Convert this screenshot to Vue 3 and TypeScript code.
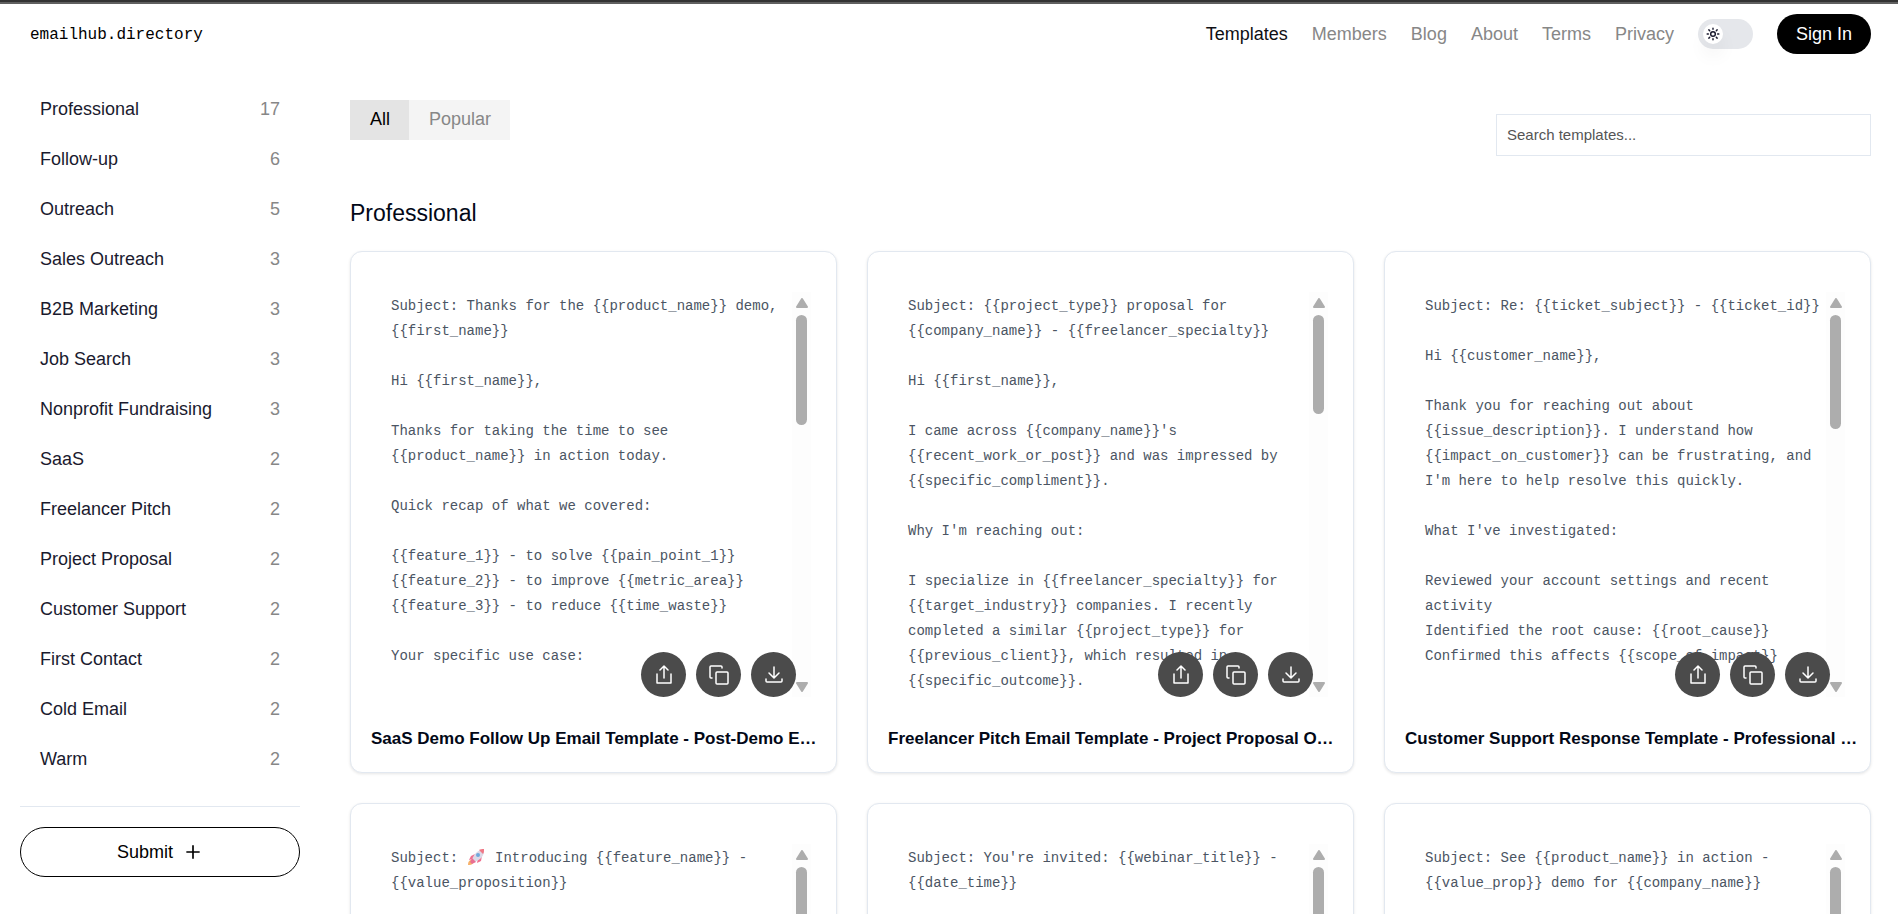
<script setup lang="ts">
import { ref } from 'vue'

interface Category { name: string; count: number }
interface Template { id: string; title?: string; thumb: number; lines: string[] }

const navLinks: string[] = ['Templates', 'Members', 'Blog', 'About', 'Terms', 'Privacy']

const categories: Category[] = [
  { name: 'Professional', count: 17 },
  { name: 'Follow-up', count: 6 },
  { name: 'Outreach', count: 5 },
  { name: 'Sales Outreach', count: 3 },
  { name: 'B2B Marketing', count: 3 },
  { name: 'Job Search', count: 3 },
  { name: 'Nonprofit Fundraising', count: 3 },
  { name: 'SaaS', count: 2 },
  { name: 'Freelancer Pitch', count: 2 },
  { name: 'Project Proposal', count: 2 },
  { name: 'Customer Support', count: 2 },
  { name: 'First Contact', count: 2 },
  { name: 'Cold Email', count: 2 },
  { name: 'Warm', count: 2 },
]

const templates: Template[] = [
  {
    id: 'saas-demo',
    title: 'SaaS Demo Follow Up Email Template - Post-Demo E…',
    thumb: 110,
    lines: [
      'Subject: Thanks for the {{product_name}} demo,',
      '{{first_name}}',
      '',
      'Hi {{first_name}},',
      '',
      'Thanks for taking the time to see',
      '{{product_name}} in action today.',
      '',
      'Quick recap of what we covered:',
      '',
      '{{feature_1}} - to solve {{pain_point_1}}',
      '{{feature_2}} - to improve {{metric_area}}',
      '{{feature_3}} - to reduce {{time_waste}}',
      '',
      'Your specific use case:',
    ],
  },
  {
    id: 'freelancer',
    title: 'Freelancer Pitch Email Template - Project Proposal O…',
    thumb: 99,
    lines: [
      'Subject: {{project_type}} proposal for',
      '{{company_name}} - {{freelancer_specialty}}',
      '',
      'Hi {{first_name}},',
      '',
      "I came across {{company_name}}'s",
      '{{recent_work_or_post}} and was impressed by',
      '{{specific_compliment}}.',
      '',
      "Why I'm reaching out:",
      '',
      'I specialize in {{freelancer_specialty}} for',
      '{{target_industry}} companies. I recently',
      'completed a similar {{project_type}} for',
      '{{previous_client}}, which resulted in',
      '{{specific_outcome}}.',
    ],
  },
  {
    id: 'support',
    title: 'Customer Support Response Template - Professional …',
    thumb: 114,
    lines: [
      'Subject: Re: {{ticket_subject}} - {{ticket_id}}',
      '',
      'Hi {{customer_name}},',
      '',
      'Thank you for reaching out about',
      '{{issue_description}}. I understand how',
      '{{impact_on_customer}} can be frustrating, and',
      "I'm here to help resolve this quickly.",
      '',
      "What I've investigated:",
      '',
      'Reviewed your account settings and recent',
      'activity',
      'Identified the root cause: {{root_cause}}',
      'Confirmed this affects {{scope_of_impact}}',
    ],
  },
  {
    id: 'feature',
    thumb: 110,
    lines: ['Subject: 🚀 Introducing {{feature_name}} -', '{{value_proposition}}'],
  },
  {
    id: 'webinar',
    thumb: 110,
    lines: ["Subject: You're invited: {{webinar_title}} -", '{{date_time}}'],
  },
  {
    id: 'product-demo',
    thumb: 110,
    lines: ['Subject: See {{product_name}} in action -', '{{value_prop}} demo for {{company_name}}'],
  },
]

const tab = ref<'All' | 'Popular'>('All')
const query = ref('')
const dark = ref(false)
</script>

<template>
  <div class="app">
    <div class="strip"></div>
    <header class="header">
      <a class="logo" href="#">emailhub.directory</a>
      <nav class="nav" aria-label="Main">
        <a v-for="(link, i) in navLinks" :key="link" href="#" :class="{ current: i === 0 }">{{ link }}</a>
        <label class="toggle">
          <input v-model="dark" type="checkbox" aria-label="Dark mode" />
          <span class="knob">
            <svg width="14" height="14" viewBox="0 0 24 24" fill="none" stroke="#1a1a2e" stroke-width="2.5" stroke-linecap="round">
              <circle cx="12" cy="12" r="4" />
              <path d="M12 2v2M12 20v2M4.93 4.93l1.41 1.41M17.66 17.66l1.41 1.41M2 12h2M20 12h2M6.34 17.66l-1.41 1.41M19.07 4.93l-1.41 1.41" />
            </svg>
          </span>
        </label>
        <button class="signin" type="button">Sign In</button>
      </nav>
    </header>

    <div class="body">
      <aside class="sidebar">
        <ul class="categories">
          <li v-for="c in categories" :key="c.name">
            <a href="#"><span>{{ c.name }}</span><span class="count">{{ c.count }}</span></a>
          </li>
        </ul>
        <div class="submit-area">
          <button class="submit" type="button">
            Submit
            <svg width="20" height="20" viewBox="0 0 24 24" fill="none" stroke="currentColor" stroke-width="2">
              <path d="M12 4v16M4 12h16" />
            </svg>
          </button>
        </div>
      </aside>

      <main class="main">
        <div class="toolbar">
          <div class="tabs">
            <button type="button" :class="{ active: tab === 'All' }" @click="tab = 'All'">All</button>
            <button type="button" :class="{ active: tab === 'Popular' }" @click="tab = 'Popular'">Popular</button>
          </div>
          <input v-model="query" class="search" type="text" placeholder="Search templates..." aria-label="Search templates" />
        </div>

        <h2 class="heading">Professional</h2>

        <div class="grid">
          <article v-for="t in templates" :key="t.id" class="card">
            <div class="preview">
              <div class="text">
                <div v-for="(line, i) in t.lines" :key="i" class="line"><template v-for="(part, j) in line.split('🚀')" :key="j"><svg v-if="j > 0" class="rocket" width="20" height="16" viewBox="0 0 20 16"><path d="M5 11c-3 0-4 2-4 5 2 0 4 0 5-2z" fill="#f6b26b" /><path d="M8 5 4 7l-2 4 4-1zM11 9l-1 5-2 1 6-3 1-5z" fill="#f0708f" /><path d="M16 1c-5 0-8 3-11 9l3 3c6-3 9-6 9-12z" fill="#dcd8e6" /><path d="M17 0c-2 0-4 0-5 1l4 4c1-1 1-3 1-5z" fill="#f07886" /><circle cx="11" cy="6" r="2" fill="#6fa8dc" /><path d="m5 9 4 4-4 2-2-2z" fill="#e96f92" /></svg>{{ part }}</template></div>
              </div>
              <div class="scrollbar" aria-hidden="true">
                <svg width="14" height="10" viewBox="0 0 14 10"><path d="M7 1 12 9H2z" fill="#adadad" stroke="#adadad" stroke-width="2" stroke-linejoin="round" /></svg>
                <div class="thumb" :style="{ height: t.thumb + 'px' }"></div>
                <svg class="down" width="14" height="10" viewBox="0 0 14 10"><path d="M7 9 2 1h10z" fill="#adadad" stroke="#adadad" stroke-width="2" stroke-linejoin="round" /></svg>
              </div>
              <div class="actions">
                <button type="button" aria-label="Share">
                  <svg width="20" height="20" viewBox="0 0 20 20"><path d="M10 13V2M6 5l4-4 4 4M3 9v9h14V9" /></svg>
                </button>
                <button type="button" aria-label="Copy">
                  <svg width="20" height="20" viewBox="0 0 20 20"><rect x="7" y="7" width="12" height="12" rx="1" /><path d="M3 13H2a1 1 0 0 1-1-1V2a1 1 0 0 1 1-1h10a1 1 0 0 1 1 1v1" /></svg>
                </button>
                <button type="button" aria-label="Download">
                  <svg width="20" height="20" viewBox="0 0 20 20"><path d="M10 2v10M5 8l5 5 5-5M2 14v2q0 1 1 1h14q1 0 1-1v-2" /></svg>
                </button>
              </div>
            </div>
            <h3 v-if="t.title" class="title">{{ t.title }}</h3>
          </article>
        </div>
      </main>
    </div>
  </div>
</template>

<style>
body { margin: 0; background: #fff; }
</style>

<style scoped>
.app {
  height: 100vh;
  overflow: hidden;
  display: flex;
  flex-direction: column;
  font-family: "Liberation Sans", Arial, sans-serif;
  font-size: 18px;
  line-height: 26px;
  color: #020817;
  background: #fff;
}
.app *, .app { box-sizing: border-box; }
a { color: inherit; text-decoration: none; }
button, input { font: inherit; color: inherit; }
button { border: 0; padding: 0; cursor: pointer; }
svg { display: block; }

.strip { flex: none; height: 4px; background: #606060; border-top: 2px solid #333; }
.header {
  flex: none;
  display: flex;
  align-items: center;
  justify-content: space-between;
  height: 60px;
  padding: 0 27px 0 30px;
}
.logo { padding-top: 2px; font-family: "Liberation Mono", monospace; font-size: 16px; color: #000; }
.nav { display: flex; align-items: center; gap: 24px; color: #878787; }
.nav .current { color: #0f0f14; }
.toggle { position: relative; width: 55px; height: 30px; padding: 5px; border-radius: 15px; background: #e5e7eb; cursor: pointer; }
.toggle input { position: absolute; inset: 0; margin: 0; opacity: 0; }
.knob {
  display: flex;
  align-items: center;
  justify-content: center;
  width: 20px;
  height: 20px;
  border-radius: 50%;
  background: #fff;
  box-shadow: 0 12px 18px rgba(0, 0, 0, 0.05);
}
.signin { height: 40px; padding: 0 19px; border-radius: 20px; background: #000; color: #fff; }

.body { flex: 1; min-height: 0; display: flex; gap: 50px; padding: 20px 27px 0 20px; }
.sidebar { flex: none; width: 280px; }
.categories { list-style: none; margin: 0; padding: 0; }
.categories a { display: flex; justify-content: space-between; align-items: center; height: 50px; padding: 0 20px; color: #1a1a2e; }
.categories .count { color: #878787; }
.submit-area { margin-top: 22px; padding-top: 20px; border-top: 1px solid #e2e8f0; }
.submit {
  display: flex;
  align-items: center;
  justify-content: center;
  gap: 10px;
  width: 100%;
  height: 50px;
  border: 1px solid #000;
  border-radius: 25px;
  background: #fff;
  color: #000;
}

.main { flex: 1; min-width: 0; padding-top: 16px; }
.toolbar { display: flex; justify-content: space-between; align-items: flex-start; }
.tabs { display: flex; background: #f4f4f4; }
.tabs button { height: 40px; padding: 0 19px 2px 20px; background: transparent; color: #878787; }
.tabs .active { background: #e4e4e4; color: #000; }
.search {
  width: 375px;
  height: 42px;
  margin-top: 14px;
  padding: 0 10px 2px;
  border: 1px solid #e2e8f0;
  background: #fff;
  font-size: 15px;
}
.search::placeholder { color: #555; opacity: 1; }
.heading { margin: 39px 0 20px; font-size: 23px; line-height: 36px; font-weight: 400; }

.grid { display: grid; grid-template-columns: repeat(3, minmax(0, 1fr)); gap: 30px; }
.card {
  padding: 40px 20px 19px;
  border: 1px solid #e2e8f0;
  border-radius: 12px;
  background: #fff;
  box-shadow: 0 1px 3px rgba(0, 0, 0, 0.1);
}
.preview { position: relative; display: flex; height: 405px; padding-right: 5px; }
.text {
  flex: 1;
  min-width: 0;
  overflow: hidden;
  padding: 2px 0 0 20px;
  font-family: "Liberation Mono", monospace;
  font-size: 14px;
  line-height: 25px;
  color: #4b5563;
}
.line { height: 25px; white-space: pre; }
.rocket { display: inline-block; vertical-align: -3px; }
.scrollbar {
  flex: none;
  display: flex;
  flex-direction: column;
  align-items: center;
  gap: 7px;
  width: 19px;
  padding: 6px 0 5px;
  background: #fdfdfd;
}
.thumb { width: 11px; border-radius: 6px; background: #adadad; }
.down { margin-top: auto; }
.actions { position: absolute; right: 20px; bottom: 0; display: flex; gap: 10px; }
.actions button {
  display: flex;
  align-items: center;
  justify-content: center;
  width: 45px;
  height: 45px;
  border-radius: 50%;
  background: #4b4b4b;
}
.actions svg { fill: none; stroke: #fff; stroke-width: 1.5; stroke-linecap: round; stroke-linejoin: round; }
.title {
  margin: 28px 0 0;
  font-size: 17px;
  line-height: 28px;
  font-weight: 700;
  white-space: nowrap;
}
</style>
